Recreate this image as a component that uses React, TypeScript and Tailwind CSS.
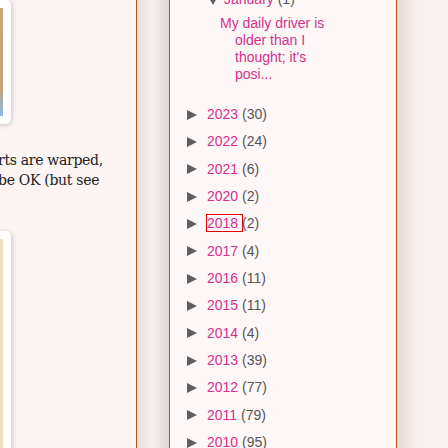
import React from 'react'

const years: [string, number][] = [
  ['2023', 30],
  ['2022', 24],
  ['2021', 6],
  ['2020', 2],
  ['2018', 2],
  ['2017', 4],
  ['2016', 11],
  ['2015', 11],
  ['2014', 4],
  ['2013', 39],
  ['2012', 77],
  ['2011', 79],
  ['2010', 95],
]

function Arrow({ down = false }: { down?: boolean }) {
  return (
    <svg width="10" height="10" viewBox="0 0 10 10" className="shrink-0">
      {down ? <polygon points="0,1 10,1 5,10" fill="#5e5e5e" /> : <polygon points="0,0 10,5 0,10" fill="#5e5e5e" />}
    </svg>
  )
}

export default function App() {
  return (
    <div
      className="flex w-[448px] h-[448px] overflow-hidden bg-[#fcf5f4]"
      style={{ fontFamily: 'Arial, "Liberation Sans", sans-serif' }}
    >
      {/* main post column, mostly scrolled off to the left */}
      <div className="w-[136px] shrink-0 overflow-hidden flex flex-col">
        <div className="ml-[-200px] w-[211px] h-[124px] bg-white rounded-[5px] p-[8px] shadow-[1px_1px_5px_rgba(0,0,0,0.2)] shrink-0">
          <div className="h-full bg-gradient-to-b from-[#c9a67a] via-[#c4a37e] via-75% to-[#86b5ec]" />
        </div>
        <div
          className="mt-[26px] text-[14px] leading-[20px] tracking-[-0.3px] text-[#222] whitespace-nowrap ml-[-2px]"
          style={{ fontFamily: '"DejaVu Serif", "Liberation Serif", serif' }}
        >
          <div>rts are warped,</div>
          <div>be OK (but see</div>
        </div>
        <div className="ml-[-200px] w-[211px] h-[240px] mt-[41px] bg-white rounded-[5px] p-[8px] shadow-[1px_1px_5px_rgba(0,0,0,0.2)] shrink-0">
          <div className="h-full bg-[#f1dfbd]" />
        </div>
      </div>

      {/* gutter */}
      <div className="w-[34px] shrink-0 border-x border-[#b0561c] bg-gradient-to-r from-[#e9dfdd] via-[#f6f0ef] to-[#e2d6d4]" />

      {/* sidebar archive */}
      <div className="w-[227px] shrink-0 border-r border-[#b0561c] bg-[#fdf8f7] text-[14px] text-[#555]">
        <div className="flex items-center h-[17px] mt-[-9px] pl-[38px] gap-[6px] leading-[17px]">
          <Arrow down />
          <span>
            <span className="text-[#d62f8f]">January</span> (1)
          </span>
        </div>
        <div className="pl-[50px] pr-[55px] pt-[7px] leading-[17px] text-[#d62f8f]">
          <div className="pl-[15px] indent-[-15px]">My daily driver is older than I thought; it's posi...</div>
        </div>
        <div className="mt-[18px] flex flex-col">
          {years.map(([y, n]) => (
            <div key={y} className="h-[27.33px] shrink-0 flex items-center pl-[17px] gap-[10px] leading-[17px] whitespace-nowrap">
              <Arrow />
              <span>
                <span className={y === '2018' ? 'text-[#d62f8f] outline outline-1 outline-[#e00000]' : 'text-[#d62f8f]'}>
                  {y}{' '}
                </span>
                ({n})
              </span>
            </div>
          ))}
        </div>
      </div>

      {/* right shadow */}
      <div className="flex-1 bg-gradient-to-r from-[#e4d9d7] via-[#f8f0ee] via-40% to-[#fcf4f2]" />
    </div>
  )
}
